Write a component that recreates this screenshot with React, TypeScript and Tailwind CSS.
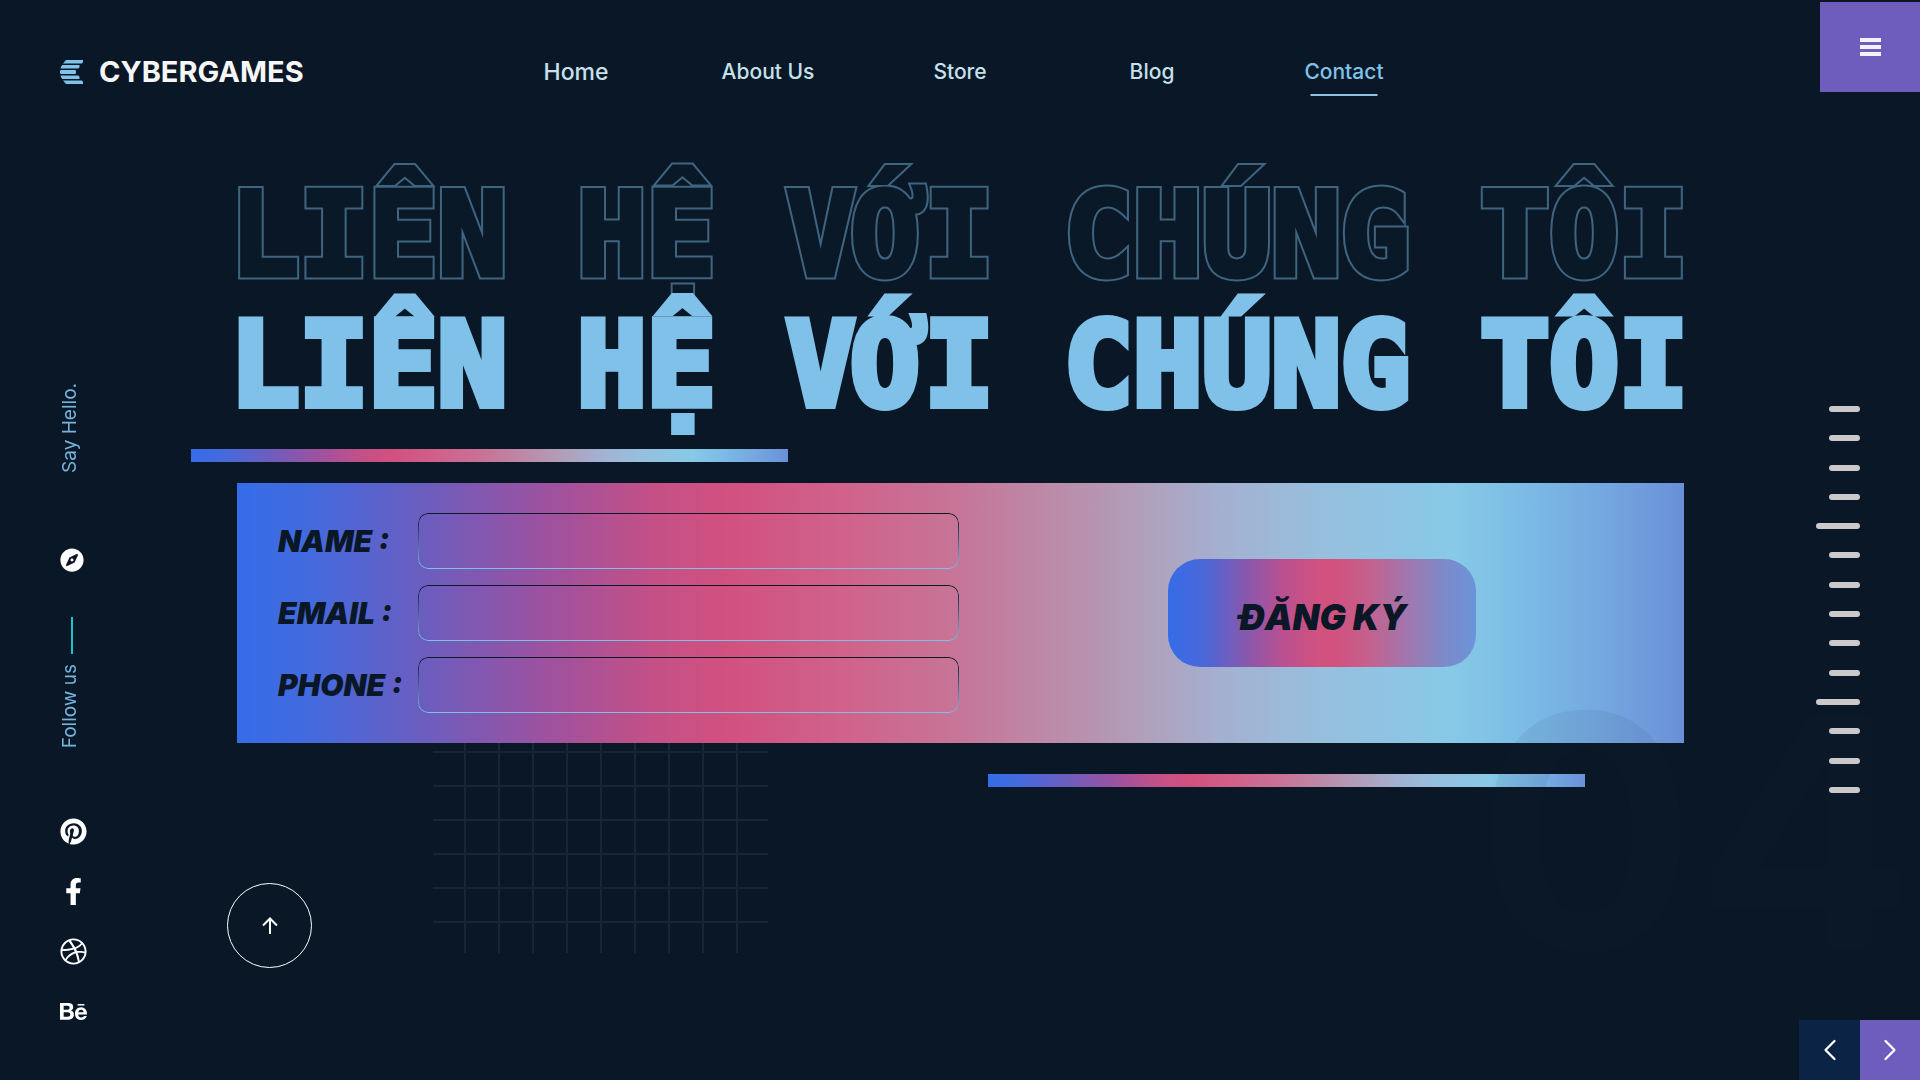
import React from "react";
import { FaBehance, FaCompass, FaDribbble, FaFacebookF, FaPinterest } from "react-icons/fa";
import { FiChevronLeft, FiChevronRight } from "react-icons/fi";

const rainbow =
  "bg-[linear-gradient(90deg,#356ce8_0%,#436ade_5%,#6c5dbf_13%,#9b52a0_21%,#c55086_29%,#d1517f_34%,#d0628b_42%,#c87396_49%,#b49ab5_61%,#a4b0d0_68%,#97bfde_75%,#87c9e7_84%,#7bbbe6_89%,#75a9e0_94%,#6a90d8_100%)]";

const headline = ["LIÊN", "HỆ", "VỚI", "CHÚNG", "TÔI"];
const links = ["About Us", "Store", "Blog"];
const fields = [
  { id: "name", label: "NAME :", type: "text" },
  { id: "email", label: "EMAIL :", type: "email" },
  { id: "phone", label: "PHONE :", type: "tel" },
];
const socials = [
  { name: "Pinterest", Icon: FaPinterest },
  { name: "Facebook", Icon: FaFacebookF },
  { name: "Dribbble", Icon: FaDribbble },
  { name: "Behance", Icon: FaBehance },
];

function Logo() {
  return (
    <a href="#" className="flex items-center gap-4 text-[29px] font-bold leading-9 text-[#f6f6f6]">
      <svg width="23" height="24" viewBox="0 0 23 24" fill="#7fc3ea" aria-hidden="true">
        <path d="M6 0H23V2L22 3.500H3Z" />
        <path d="M2 5H19.500V7L18.500 8.500H.4Z" />
        <rect y="10" width="16" height="4" rx="1" />
        <path d="M.4 15.500H18.500L19.500 17V19H2Z" />
        <path d="M3 20.500H22L23 22V24H6Z" />
      </svg>
      CYBERGAMES
    </a>
  );
}

function Header() {
  return (
    <header className="flex h-23 items-start">
      <div className="w-1/4 pt-[54px] pl-15">
        <Logo />
      </div>
      <nav className="grid w-1/2 grid-cols-5 pt-[54px] text-center text-[21px] font-medium leading-9 text-[#c5e1ec]">
        <a href="#" className="text-[23px]">Home</a>
        {links.map((l) => (
          <a key={l} href="#">{l}</a>
        ))}
        <a href="#" aria-current="page" className="relative text-[#7fc3ea]">
          Contact
          <span className="absolute top-10 left-1/2 h-0.5 w-[67px] -translate-x-1/2 bg-[#8dc4e4]" />
        </a>
      </nav>
      <div className="flex w-1/4 justify-end pt-0.5">
        <button aria-label="Menu" className="flex h-[90px] w-25 flex-col items-center justify-center gap-[3px] bg-[#6e5dbd]">
          <span className="h-1 w-[21px] bg-[#f4f2fb]" />
          <span className="h-1 w-[21px] bg-[#f4f2fb]" />
          <span className="h-1 w-[21px] bg-[#f4f2fb]" />
        </button>
      </div>
    </header>
  );
}

function LeftRail() {
  return (
    <aside className="flex w-[191px] flex-col items-start pt-[291px] pl-15 text-white">
      <span className="rotate-180 text-[19px] leading-5 text-[#73b3dc] [writing-mode:vertical-rl]">Say Hello.</span>
      <FaCompass className="mt-[75px] size-6" />
      <span className="mt-[45px] ml-[11px] h-[37px] w-0.5 bg-[#1cc5c8]" />
      <span className="mt-2.5 rotate-180 text-[19px] leading-5 text-[#73b3dc] [writing-mode:vertical-rl]">Follow us</span>
      <div className="mt-[70px] flex flex-col gap-[33px]">
        {socials.map(({ name, Icon }) => (
          <a key={name} href="#" aria-label={name}>
            <Icon className="size-[27px]" />
          </a>
        ))}
      </div>
    </aside>
  );
}

function Headline() {
  return (
    <h1 className="-mr-1 ml-[39px] font-['DejaVu_Sans_Mono',monospace] text-[115px] font-bold leading-[130px]">
      <span className="flex justify-between">
        {headline.map((w) => (
          <span
            key={w}
            data-word={w}
            className="relative text-[#0a1928] [-webkit-text-stroke:9px_#3f6480] [stroke-linejoin:round] before:absolute before:inset-0 before:content-[attr(data-word)] before:[-webkit-text-stroke:5px_#0a1928]"
          >
            {w}
          </span>
        ))}
      </span>
      <span className="relative flex justify-between text-[#7fc1e8] [-webkit-text-stroke:8px_#7fc1e8] [stroke-linejoin:round]">
        {headline.map((w) => (
          <span key={w}>{w}</span>
        ))}
      </span>
    </h1>
  );
}

function ContactForm() {
  return (
    <form className={`relative flex h-65 items-center pl-[41px] ${rainbow}`} onSubmit={(e) => e.preventDefault()}>
      <div className="flex w-1/2 flex-col gap-4">
        {fields.map((f) => (
          <div key={f.id} className="flex items-center">
            <label htmlFor={f.id} className="w-[140px] whitespace-nowrap text-[30px] font-black italic leading-10 text-[#0a1726]">
              {f.label}
            </label>
            <div className="relative h-14 w-[541px] before:pointer-events-none before:absolute before:inset-0 before:rounded-[10px] before:bg-linear-to-b before:from-[#0a1726] before:to-[#7fc3ea] before:p-px before:content-[''] before:[mask:linear-gradient(#000_0_0)_content-box_exclude,linear-gradient(#000_0_0)]">
              <input id={f.id} type={f.type} className="h-full w-full rounded-[10px] bg-transparent px-4 text-xl text-[#0a1726] outline-none" />
            </div>
          </div>
        ))}
      </div>
      <div className="flex flex-1 justify-center pr-[21px]">
        <button className="h-[108px] w-[308px] rounded-[32px] bg-[linear-gradient(90deg,#356ce8_0%,#4b67d8_12%,#8658ae_25%,#b95091_37%,#d1527f_49%,#d1527f_55%,#c5608d_65%,#9a7bb3_80%,#7c8acb_90%,#6b94d9_100%)] pt-2 text-[35px] font-black italic leading-10 text-[#0a1726]">
          ĐĂNG KÝ
        </button>
      </div>
    </form>
  );
}

function RightRail() {
  return (
    <aside className="relative z-10 flex w-[236px] flex-col items-end justify-between">
      <div className="mt-[314px] mr-15 flex h-[387px] flex-col items-end justify-between">
        {Array.from({ length: 14 }, (_, i) => (
          <span key={i} className={`h-1.5 rounded-full bg-[#cbc9ca] ${i === 4 || i === 10 ? "w-11" : "w-[31px]"}`} />
        ))}
      </div>
      <div className="flex">
        <button aria-label="Previous" className="flex h-15 w-[61px] items-center justify-center bg-[#0b2344] text-white">
          <FiChevronLeft className="size-9" strokeWidth={1.5} />
        </button>
        <button aria-label="Next" className="flex size-15 items-center justify-center bg-[#6e5dbd] text-white">
          <FiChevronRight className="size-9" strokeWidth={1.5} />
        </button>
      </div>
    </aside>
  );
}

export default function App() {
  return (
    <div className="relative flex min-h-screen flex-col overflow-hidden bg-[#091726] font-['Inter',sans-serif]">
      <Header />
      <div className="flex flex-1">
        <LeftRail />
        <main className="min-w-0 flex-1 pt-[78px]">
          <Headline />
          <div className={`mt-[19px] h-[13px] w-2/5 ${rainbow}`} />
          <div className="relative mt-[21px] ml-[46px]">
            <ContactForm />
            <div className="absolute top-full left-[196px] h-[210px] w-[335px] bg-[linear-gradient(90deg,#182534_2px,transparent_2px),linear-gradient(#182534_2px,transparent_2px)] bg-size-[34px_34px] bg-position-[-3px_8px,0_8px]" />
          </div>
          <div className={`mt-[31px] mr-[99px] ml-auto h-[13px] w-2/5 ${rainbow}`} />
          <a href="#" aria-label="Back to top" className="mt-24 ml-9 flex size-[85px] items-center justify-center rounded-full border border-white text-white">
            <svg width="16" height="17" viewBox="0 0 16 17" fill="none" stroke="currentColor" strokeWidth="2" aria-hidden="true">
              <path d="M8 17V1.500M1 8.500L8 1.500L15 8.500" />
            </svg>
          </a>
        </main>
        <RightRail />
      </div>
      <div className="pointer-events-none absolute right-1 bottom-[48px] text-[326px] font-bold leading-[400px] text-[#1d3040]/7">04</div>
    </div>
  );
}
